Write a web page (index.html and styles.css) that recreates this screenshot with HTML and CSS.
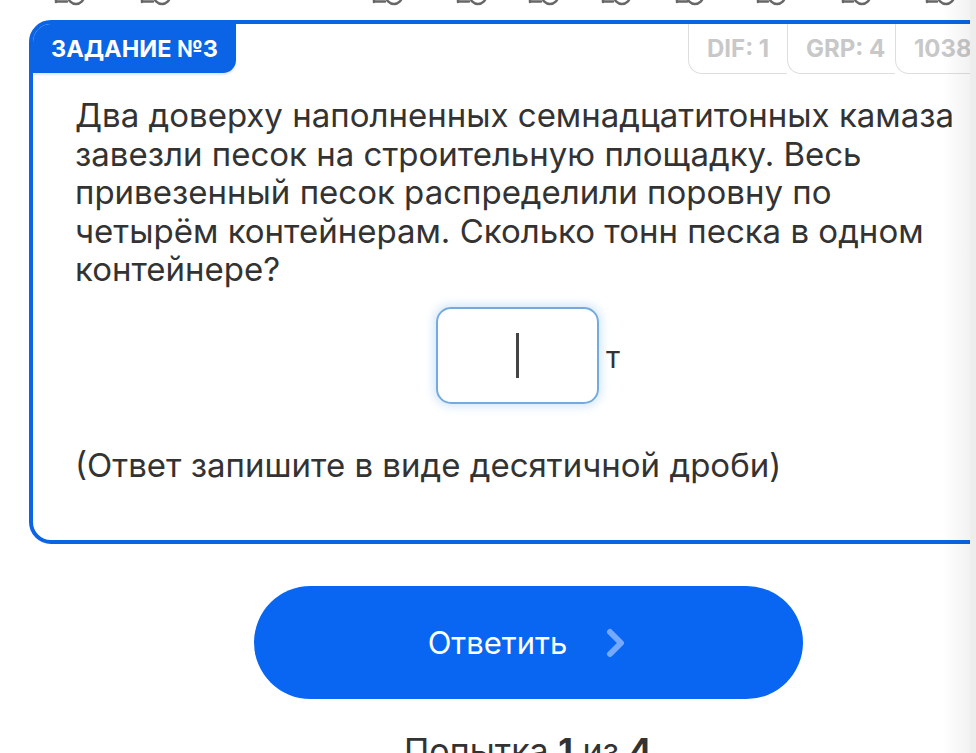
FILE: index.html
```html
<!DOCTYPE html>
<html lang="ru">
<head>
<meta charset="utf-8">
<title>Задание №3</title>
<link rel="stylesheet" href="styles.css">
</head>
<body>
<div class="screen">
  <div class="main">
    <div class="page">
      <svg class="steps" width="1056" height="20" viewBox="0 0 1056 20">
        <g fill="none" stroke="#676767" stroke-width="2.5" stroke-linecap="round">
          <path d="M56 0v2M57 1.5h10"/><circle cx="76" cy="-4" r="8"/>
          <path d="M142 0v2M143 1.5h10"/><circle cx="162" cy="-4" r="8"/>
          <path d="M374 0v2M375 1.5h10"/><circle cx="394" cy="-4" r="8"/>
          <path d="M458 0v2M459 1.5h10"/><circle cx="478" cy="-4" r="8"/>
          <path d="M530 0v2M531 1.5h10"/><circle cx="550" cy="-4" r="8"/>
          <path d="M603 0v2M604 1.5h9"/><circle cx="622" cy="-4" r="8"/>
          <path d="M677 0v2M678 1.5h9"/><circle cx="695" cy="-4" r="8"/>
          <path d="M758 0v2M759 1.5h9"/><circle cx="777" cy="-4" r="8"/>
          <path d="M843 0v2M844 1.5h9"/><circle cx="862" cy="-4" r="8"/>
          <path d="M927 0v2M928 1.5h9"/><circle cx="946" cy="-4" r="8"/>
        </g>
      </svg>
      <div class="card">
        <div class="card-head">
          <div class="tab">ЗАДАНИЕ №3</div>
          <div class="badges">
            <div class="badge badge-dif">DIF: 1</div>
            <div class="badge badge-grp">GRP: 4</div>
            <div class="badge badge-id">1038</div>
          </div>
        </div>
        <div class="card-body">
          <p class="task">Два доверху наполненных семнадцатитонных камаза<br>завезли песок на строительную площадку. Весь<br>привезенный песок распределили поровну по<br>четырём контейнерам. Сколько тонн песка в одном<br>контейнере?</p>
          <div class="answer">
            <div class="field"><span class="caret"></span></div>
            <span class="unit">т</span>
          </div>
          <p class="hint">(Ответ запишите в виде десятичной дроби)</p>
        </div>
      </div>
      <button class="submit" type="button">
        <span class="submit-label">Ответить</span>
        <svg class="chevron" width="24" height="30" viewBox="0 0 24 30">
          <path d="M6 4l11 11-11 11" fill="none" stroke="#74a9ff" stroke-width="6" stroke-linecap="round" stroke-linejoin="round"/>
        </svg>
      </button>
      <p class="attempt">Попытка <b>1</b> из <b>4</b></p>
    </div>
  </div>
  <div class="edge"></div>
</div>
</body>
</html>
```

FILE: styles.css
```css
* { box-sizing: border-box; }
html, body {
  margin: 0;
  padding: 0;
  background: #ffffff;
  height: 753px;
  overflow: hidden;
}
body {
  font-family: Inter, "Noto Sans", "Liberation Sans", sans-serif;
  color: #333333;
}
.screen {
  display: flex;
  height: 753px;
}
.main {
  width: 970px;
  height: 753px;
  overflow: hidden;
  position: relative;
}
.main::after {
  content: "";
  position: absolute;
  top: 0;
  right: 0;
  width: 28px;
  height: 100%;
  background: linear-gradient(to right, rgba(0, 0, 0, 0), rgba(0, 0, 0, 0.05));
  pointer-events: none;
}
.edge {
  width: 6px;
  background: #ededed;
}
.page {
  width: 1056px;
}
.steps {
  display: block;
}
.card {
  margin-left: 29px;
  width: 998px;
  border: 4px solid #0b63e6;
  border-radius: 22px;
  overflow: hidden;
  background: #ffffff;
}
.card-head {
  display: flex;
  align-items: flex-start;
}
.tab {
  width: 203px;
  height: 49px;
  background: #0b63e6;
  color: #ffffff;
  font-weight: 700;
  font-size: 23.5px;
  display: flex;
  align-items: center;
  padding-left: 18px;
  border-bottom-right-radius: 13px;
  box-shadow: 0 2px 2px rgba(11, 99, 230, 0.15);
}
.badges {
  display: flex;
  margin-left: 452px;
}
.badge {
  height: 50px;
  border-left: 1.5px solid #dedede;
  border-bottom: 1.5px solid #dedede;
  border-bottom-left-radius: 14px;
  color: #c8c8c8;
  font-weight: 700;
  font-size: 24px;
  display: flex;
  align-items: center;
  padding-left: 18px;
}
.badge-dif { width: 99px; }
.badge-grp { width: 108px; }
.badge-id { width: 100px; }
.card-body {
  padding: 22px 42px 56px 42px;
}
.task {
  margin: 0;
  font-size: 33px;
  line-height: 38.5px;
  white-space: nowrap;
}
.answer {
  margin-top: 18px;
  display: flex;
  justify-content: center;
  align-items: center;
  gap: 7px;
}
.field {
  width: 163px;
  height: 97px;
  border: 2px solid #74aade;
  border-radius: 15px;
  box-shadow: 0 0 8px 3px rgba(120, 180, 240, 0.3);
  display: flex;
  align-items: center;
  justify-content: center;
}
.caret {
  width: 3px;
  height: 45px;
  background: #444444;
}
.unit {
  font-size: 30px;
  margin-top: 4px;
}
.hint {
  margin: 42px 0 0 0;
  font-size: 33px;
  line-height: 38.5px;
}
.submit {
  display: flex;
  align-items: center;
  justify-content: center;
  gap: 37px;
  margin: 42px auto 0 auto;
  width: 549px;
  height: 113px;
  border: none;
  border-radius: 57px;
  background: #0866f2;
  font-family: Inter, "Noto Sans", "Liberation Sans", sans-serif;
  cursor: pointer;
  padding: 0;
}
.submit-label {
  color: #ffffff;
  font-size: 31px;
}
.chevron {
  display: block;
}
.attempt {
  margin: 31px 0 0 0;
  text-align: center;
  font-size: 34px;
  color: #333333;
}
.attempt b {
  font-weight: 700;
}
```
